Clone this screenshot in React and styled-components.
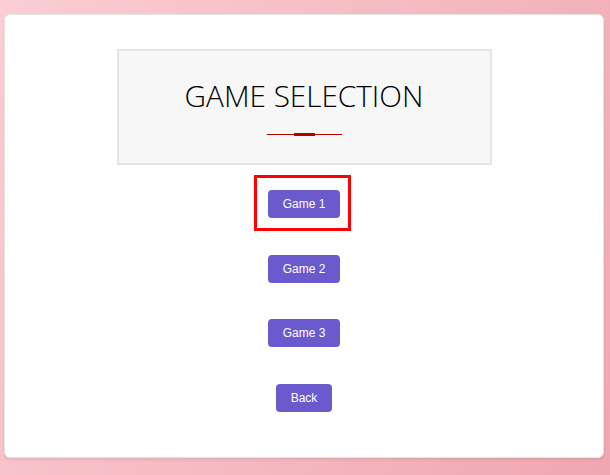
import styled, { createGlobalStyle } from 'styled-components'

const Global = createGlobalStyle`
  html, body { margin: 0; padding: 0; }
  body { font-family: "Liberation Sans", Arial, sans-serif; }
  * { box-sizing: border-box; }
`

const Page = styled.div`
  min-height: 100vh;
  height: 475px;
  padding: 14px 6px 17px 4px;
  background: linear-gradient(115deg, #fbcdd4 0%, #f6bcc4 45%, #efa7b2 100%);
`

const Card = styled.div`
  height: 100%;
  background: #fff;
  border: 1px solid #e6e6e6;
  border-radius: 6px;
  box-shadow: 0 2px 3px rgba(0, 0, 0, 0.08);
  display: flex;
  flex-direction: column;
  align-items: center;
  padding-top: 34px;
`

const HeaderBox = styled.div`
  width: 375px;
  background: #f7f7f7;
  border: 2px solid #e4e4e4;
  padding: 25px 0 27px;
  display: flex;
  flex-direction: column;
  align-items: center;
`

const Title = styled.h1`
  margin: 0;
  font-family: "Open Sans", "Noto Sans", sans-serif;
  font-weight: 300;
  font-size: 29.7px;
  line-height: 40px;
  color: #000;
`

const Divider = styled.div`
  margin-top: 17px;
  width: 75px;
  height: 3px;
  display: flex;
  align-items: center;
`

const Line = styled.span`
  flex: 1;
  height: 1px;
  background: #b30000;
`

const Bar = styled.span`
  width: 21px;
  height: 3px;
  background: #b30000;
`

const Menu = styled.div`
  margin-top: 25px;
  display: flex;
  flex-direction: column;
  align-items: center;
  gap: 36.5px;
`

const Button = styled.button`
  position: relative;
  height: 28px;
  padding: 0 14.65px;
  border: none;
  border-radius: 4px;
  background: #6a5acd;
  color: #fff;
  font-family: "Liberation Sans", Arial, sans-serif;
  font-size: 12px;
  cursor: pointer;

  ${({ $selected }) => $selected && `
    &::after {
      content: '';
      position: absolute;
      top: -15px;
      left: -14px;
      right: -11px;
      bottom: -13px;
      border: 3px solid #ff0000;
      pointer-events: none;
    }
  `}
`

const games = ['Game 1', 'Game 2', 'Game 3']

export default function App() {
  return (
    <>
      <Global />
      <Page>
        <Card>
          <HeaderBox>
            <Title>GAME SELECTION</Title>
            <Divider>
              <Line />
              <Bar />
              <Line />
            </Divider>
          </HeaderBox>
          <Menu>
            {games.map((g, i) => (
              <Button key={g} $selected={i === 0}>{g}</Button>
            ))}
            <Button>Back</Button>
          </Menu>
        </Card>
      </Page>
    </>
  )
}
